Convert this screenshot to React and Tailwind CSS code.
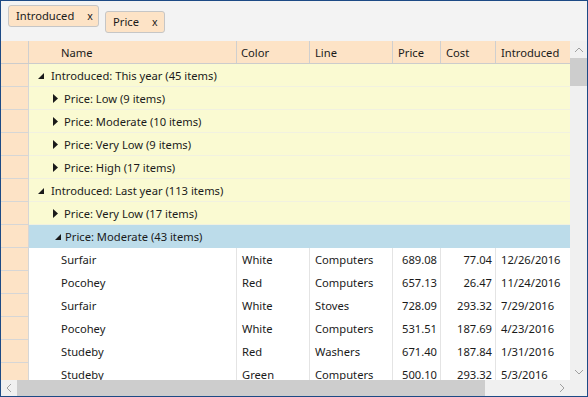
import React from "react";

const font = { fontFamily: '"Noto Sans", "Open Sans", sans-serif' };

function ExpGlyph() {
  return (
    <svg width="6" height="6" viewBox="0 0 6 6" className="shrink-0">
      <polygon points="6,0 6,6 0,6" fill="#1a1a1a" />
    </svg>
  );
}
function ColGlyph() {
  return (
    <svg width="5" height="9" viewBox="0 0 5 9" className="shrink-0">
      <polygon points="0,0 5,4.5 0,9" fill="#1a1a1a" />
    </svg>
  );
}

const rows = [
  { t: "g1", text: "Introduced: This year (45 items)" },
  { t: "g2", text: "Price: Low (9 items)" },
  { t: "g2", text: "Price: Moderate (10 items)" },
  { t: "g2", text: "Price: Very Low (9 items)" },
  { t: "g2", text: "Price: High (17 items)" },
  { t: "g1", text: "Introduced: Last year (113 items)" },
  { t: "g2", text: "Price: Very Low (17 items)" },
  { t: "g2e", text: "Price: Moderate (43 items)" },
];

const data = [
  ["Surfair", "White", "Computers", "689.08", "77.04", "12/26/2016"],
  ["Pocohey", "Red", "Computers", "657.13", "26.47", "11/24/2016"],
  ["Surfair", "White", "Stoves", "728.09", "293.32", "7/29/2016"],
  ["Pocohey", "White", "Computers", "531.51", "187.69", "4/23/2016"],
  ["Studeby", "Red", "Washers", "671.40", "187.84", "1/31/2016"],
  ["Studeby", "Green", "Computers", "500.10", "293.32", "5/3/2016"],
];

function Indicator() {
  return <div className="w-[28px] shrink-0 bg-[#fde3c6] border-r border-b border-[#d6d6d6]" />;
}

function GroupRow({ r }) {
  const sel = r.t === "g2e";
  return (
    <div className="flex h-[23px] shrink-0">
      <Indicator />
      <div
        className={
          "flex-1 flex items-center pt-[2px] border-b " +
          (sel ? "bg-[#bcdcea] border-[#bcdcea]" : "bg-[#fafad2] border-[#f1f1e0]")
        }
      >
        {r.t === "g1" && (
          <div className="flex items-center pl-[9px]">
            <ExpGlyph />
            <span className="ml-[7px] whitespace-nowrap">{r.text}</span>
          </div>
        )}
        {r.t === "g2" && (
          <div className="flex items-center pl-[24px]">
            <ColGlyph />
            <span className="ml-[6px] whitespace-nowrap">{r.text}</span>
          </div>
        )}
        {r.t === "g2e" && (
          <div className="flex items-center pl-[26px]">
            <ExpGlyph />
            <span className="ml-[4px] whitespace-nowrap">{r.text}</span>
          </div>
        )}
      </div>
    </div>
  );
}

function DataRow({ d }) {
  return (
    <div className="flex h-[23px] shrink-0 bg-white">
      <Indicator />
      <div className="w-[208px] shrink-0 border-r border-[#e4e4e4] flex items-center pt-[2px] pl-[32px]">{d[0]}</div>
      <div className="w-[73px] shrink-0 border-r border-[#e4e4e4] flex items-center pt-[2px] pl-[5px]">{d[1]}</div>
      <div className="w-[83px] shrink-0 border-r border-[#e4e4e4] flex items-center pt-[2px] pl-[5px]">{d[2]}</div>
      <div className="w-[48px] shrink-0 border-r border-[#e4e4e4] flex items-center pt-[2px] justify-end pr-[3px]">{d[3]}</div>
      <div className="w-[55px] shrink-0 border-r border-[#e4e4e4] flex items-center pt-[2px] justify-end pr-[3px]">{d[4]}</div>
      <div className="w-[74px] shrink-0 flex items-center pt-[2px] pl-[5px] whitespace-nowrap">{d[5]}</div>
    </div>
  );
}

function Chevron({ dir }) {
  const paths = {
    up: "M1 5 L5 1 L9 5",
    down: "M1 1 L5 5 L9 1",
  };
  const hp = {
    left: "M5 1 L1 5 L5 9",
    right: "M1 1 L5 5 L1 9",
  };
  if (dir === "up" || dir === "down")
    return (
      <svg width="10" height="6" viewBox="0 0 10 6">
        <path d={paths[dir]} fill="none" stroke="#a0a0a0" strokeWidth="1" />
      </svg>
    );
  return (
    <svg width="6" height="10" viewBox="0 0 6 10">
      <path d={hp[dir]} fill="none" stroke="#a0a0a0" strokeWidth="1" />
    </svg>
  );
}

export default function App() {
  return (
    <div
      className="w-[588px] h-[397px] border border-[#1d4a85] bg-[#f3f3f3] flex flex-col overflow-hidden text-[11.2px] text-[#1a1a1a]"
      style={font}
    >
      {/* group panel */}
      <div className="h-[40px] shrink-0 flex items-start">
        <div className="ml-[7px] mt-[4px] h-[22px] w-[91px] flex items-center rounded-[3px] border border-[#c6c6c6] bg-[#fde3c6] pl-[7px] pt-[1px]">
          <span>Introduced</span>
          <span className="ml-[13px] text-[10.5px]">x</span>
        </div>
        <div className="ml-[6px] mt-[10px] h-[22px] w-[60px] flex items-center rounded-[3px] border border-[#c6c6c6] bg-[#fde3c6] pl-[7px] pt-[1px]">
          <span>Price</span>
          <span className="ml-[13px] text-[10.5px]">x</span>
        </div>
      </div>

      <div className="flex-1 flex min-h-0">
        <div className="flex-1 flex flex-col min-w-0 overflow-hidden">
          {/* header */}
          <div className="flex h-[23px] shrink-0 bg-[#fde3c6] border-b border-[#cccccc]">
            <div className="w-[28px] shrink-0 border-r border-[#cfcfcf]" />
            <div className="w-[208px] shrink-0 border-r border-[#cfcfcf] flex items-center pt-[2px] pl-[32px]">Name</div>
            <div className="w-[73px] shrink-0 border-r border-[#cfcfcf] flex items-center pt-[2px] pl-[4px]">Color</div>
            <div className="w-[83px] shrink-0 border-r border-[#cfcfcf] flex items-center pt-[2px] pl-[5px]">Line</div>
            <div className="w-[48px] shrink-0 border-r border-[#cfcfcf] flex items-center pt-[2px] pl-[5px]">Price</div>
            <div className="w-[55px] shrink-0 border-r border-[#cfcfcf] flex items-center pt-[2px] pl-[5px]">Cost</div>
            <div className="w-[74px] shrink-0 flex items-center pt-[2px] pl-[5px]">Introduced</div>
          </div>
          {rows.map((r, i) => (
            <GroupRow key={i} r={r} />
          ))}
          {data.map((d, i) => (
            <DataRow key={i} d={d} />
          ))}
        </div>
        {/* vertical scrollbar */}
        <div className="w-[17px] shrink-0 bg-[#f0f0f0] flex flex-col">
          <div className="h-[17px] flex items-center justify-center">
            <Chevron dir="up" />
          </div>
          <div className="h-[28px] bg-[#cdcdcd]" />
          <div className="flex-1" />
          <div className="h-[17px] flex items-center justify-center">
            <Chevron dir="down" />
          </div>
        </div>
      </div>

      {/* horizontal scrollbar */}
      <div className="h-[16px] shrink-0 flex bg-[#f0f0f0]">
        <div className="w-[16px] flex items-center justify-center">
          <Chevron dir="left" />
        </div>
        <div className="w-[468px] bg-[#cdcdcd]" />
        <div className="flex-1" />
        <div className="w-[16px] flex items-center justify-center">
          <Chevron dir="right" />
        </div>
        <div className="w-[17px] bg-[#f0f0f0]" />
      </div>
    </div>
  );
}
